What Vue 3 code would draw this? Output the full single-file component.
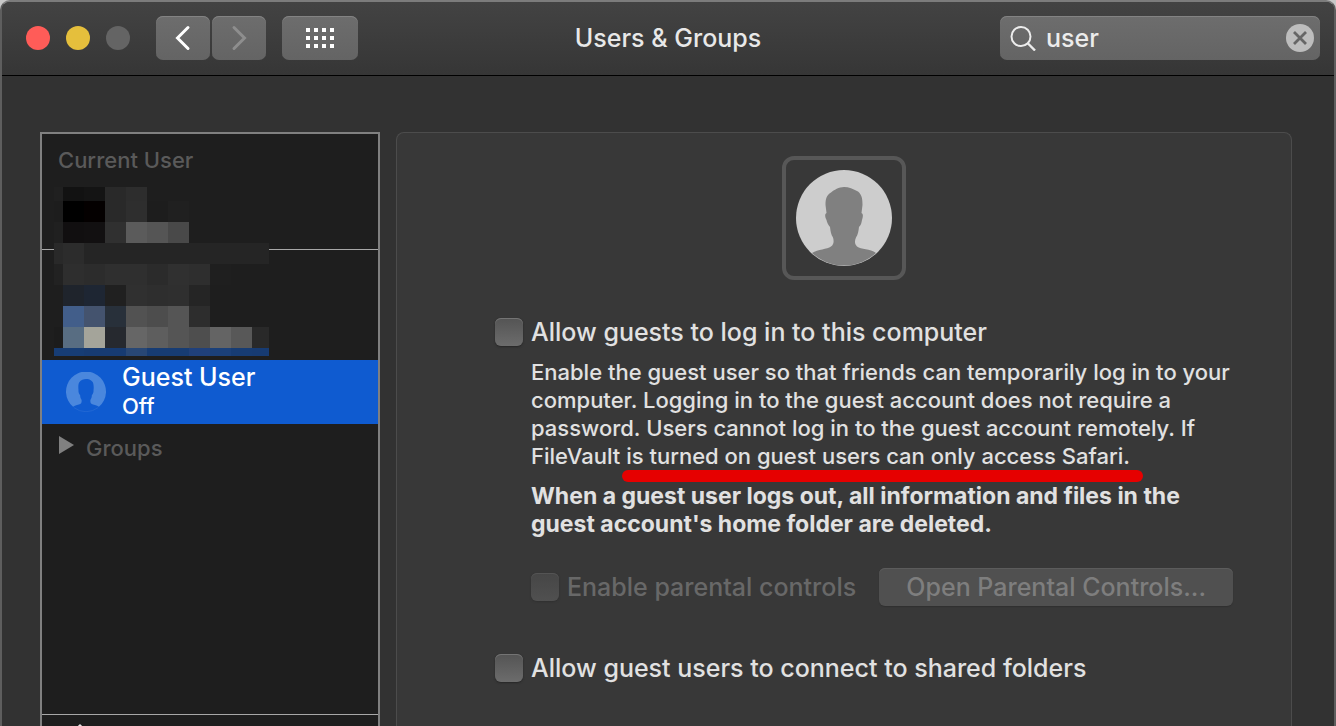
<script setup>
import { ref } from 'vue'

const query = ref('user')
const allowLogin = ref(false)
const allowShared = ref(false)
const parental = ref(false)

const dots = []
for (let row = 0; row < 3; row++) {
  for (let col = 0; col < 4; col++) dots.push({ x: col * 8, y: row * 8 })
}

// Redacted account names: one colour per tile, first and last columns are cut short
const columns = [0, 9, 30, 51, 72, 93, 114, 135, 156, 177, 198, 215]
const rows = [0, 14, 35, 56, 77, 98, 119, 140, 161, 169]
const colours = [
  ['#202020', '#121212', '#141414', '#292929', '#2d2d2d', '', '', '', '', '', ''],
  ['#1d1d1d', '#000000', '#040000', '#292929', '#2e2e2e', '#1d1d1d', '#202020', '', '', '', ''],
  ['#202020', '#110f10', '#121011', '#303030', '#5b5b5b', '#555555', '#494949', '', '', '', ''],
  ['#292929', '#2c2c2c', '#252525', '#252525', '#252525', '#252525', '#252525', '#252525', '#252525', '#252525', '#252525'],
  ['#222222', '#2e2e2e', '#2c2c2c', '#2f2f2f', '#2f2f2f', '#2b2b2b', '#303030', '#2e2e2e', '#1f1f1f', '', ''],
  ['#1e1e1e', '#1f242c', '#1e2633', '#202020', '#303030', '#2e2e2e', '#2f2f2f', '#252525', '', '', ''],
  ['#1e1e1e', '#425e8a', '#44536e', '#28303a', '#525252', '#4d4d4d', '#555555', '#2d2d2d', '', '', ''],
  ['#1c1c1c', '#586d82', '#a4a49a', '#26292f', '#666666', '#5e5e5e', '#555555', '#4e4e4e', '#646464', '#585858', '#292929'],
  ['#173d75', '#173d75', '#173b72', '#173b72', '#284775', '#173c73', '#173c73', '#20407a', '#1b4079', '#173c73', '#173b72']
]
const tiles = colours.flatMap((line, r) =>
  line.map((fill, c) => ({
    fill,
    x: columns[c],
    y: rows[r],
    w: columns[c + 1] - columns[c],
    h: rows[r + 1] - rows[r]
  })).filter((tile) => tile.fill)
)
</script>

<template>
  <div class="window">
    <header class="titlebar">
      <div class="controls">
        <div class="lights">
          <button class="light red" type="button" aria-label="Close"></button>
          <button class="light yellow" type="button" aria-label="Minimise"></button>
          <button class="light grey" type="button" aria-label="Zoom" disabled></button>
        </div>
        <div class="nav">
          <button class="tool" type="button" aria-label="Back">
            <svg width="16" height="26" viewBox="0 0 16 26"><path d="M13 2.5 2.5 13 13 23.5" fill="none" stroke="#fff" stroke-width="3" stroke-linecap="round" stroke-linejoin="miter" /></svg>
          </button>
          <button class="tool" type="button" aria-label="Forward" disabled>
            <svg width="16" height="26" viewBox="0 0 16 26"><path d="M3 2.5 13.5 13 3 23.5" fill="none" stroke="#8e8e8e" stroke-width="3" stroke-linecap="round" stroke-linejoin="miter" /></svg>
          </button>
        </div>
        <button class="tool wide" type="button" aria-label="Show All">
          <svg width="28" height="20" viewBox="0 0 28 20"><rect v-for="(d, i) in dots" :key="i" :x="d.x" :y="d.y" width="4" height="4" fill="#fff" /></svg>
        </button>
      </div>
      <h1 class="title">Users &amp; Groups</h1>
      <div class="search">
        <svg width="26" height="26" viewBox="0 0 26 26"><circle cx="11" cy="11.500" r="9.500" fill="none" stroke="#ececec" stroke-width="2" /><path d="M17.500 18 25 25.500" stroke="#ececec" stroke-width="2.400" /></svg>
        <input v-model="query" class="query" type="text" aria-label="Search" />
        <button class="clear" type="button" aria-label="Clear" @click="query = ''">
          <svg width="28" height="28" viewBox="0 0 28 28"><circle cx="14" cy="14" r="14" fill="#bdbdbd" /><path d="M8 8 20 20M20 8 8 20" stroke="#666" stroke-width="2.8" /></svg>
        </button>
      </div>
    </header>

    <main class="content">
      <aside class="sidebar">
        <div class="accounts">
          <h2 class="heading">Current User</h2>
          <div class="hidden-users">
            <div class="current"></div>
            <div class="others"></div>
            <svg class="mosaic" width="215" height="169" viewBox="0 0 215 169" shape-rendering="crispEdges">
              <rect v-for="(t, i) in tiles" :key="i" :x="t.x" :y="t.y" :width="t.w" :height="t.h" :fill="t.fill" />
            </svg>
          </div>
          <button class="guest" type="button">
            <svg width="40" height="40" viewBox="0 0 96 96">
              <path fill="#4a87dd" d="M17 83.500A48 48 0 1 1 79 83.500C74 79 65 79 61 76C58 73.500 58.500 70 58.500 67C61 64 62 60 62 56C65 52 66.500 48 66 44C67 38 66.500 28 64 24C59 18 54 17 48 17C42 17 36 19 31.500 25C29 30 29.500 38 30 44C29.500 48 31 52 34 56C34 60 35 64 37.500 67C37.500 70 38 73.500 35 76C31 79 22 79 17 83.500Z" />
              <path d="M19 85.500A48 48 0 0 0 77 85.500" fill="none" stroke="#256ad4" stroke-width="2" />
            </svg>
            <span class="who"><span class="name">Guest User</span><span class="state">Off</span></span>
          </button>
          <button class="groups" type="button">
            <svg width="15" height="24" viewBox="0 0 15 24"><path d="M0 0 15 9 0 18Z" fill="#808080" /></svg>
            <span>Groups</span>
          </button>
        </div>
        <div class="options">
          <svg width="36" height="30" viewBox="0 0 36 30"><path d="M18 0 34 15H29V29H7V15H2Z" fill="#e6e6e6" /></svg>
        </div>
      </aside>

      <section class="panel">
        <div class="portrait">
          <svg width="96" height="96" viewBox="0 0 96 96">
            <defs><clipPath id="disc"><circle cx="48" cy="48" r="47.500" /></clipPath></defs>
            <circle cx="48" cy="48" r="48" fill="#cdcdcd" />
            <path clip-path="url(#disc)" fill="#808080" d="M48 17C53 17 57 19 62 21.500C66 25 66.500 29 66.500 35L65.500 43C67.500 44 67 47 66 50C65.500 53 65 55 63 57C62.500 61 62 65 60 67.500C58.500 71 58.500 74 61 76.500C65 79.500 74 78.500 80 83V96H16V83C22 79 31 79.500 35 76.500C38 74 38 71 37 67.500C35 65 34.500 61 34 57C32 55 31 52 30.500 50C29 47 28.500 44 30.500 43L29.500 35C29.500 29 30.500 25 35 22.500C38 20 43 17 48 17Z" />
          </svg>
        </div>

        <div class="form">
          <label class="option"><input v-model="allowLogin" class="box" type="checkbox" /><span>Allow guests to log in to this computer</span></label>
          <div class="notes">
            <p>
              Enable the guest user so that friends can temporarily log in to your<br />
              computer. Logging in to the guest account does not require a<br />
              password. Users cannot log in to the guest account remotely. If<br />
              FileVault <span class="marked">is turned on guest users can only access Safari.</span>
            </p>
            <p class="warning">
              When a guest user logs out, all information and files in the<br />
              guest account's home folder are deleted.
            </p>
            <div class="parental">
              <label class="option dim"><input v-model="parental" class="box" type="checkbox" disabled /><span>Enable parental controls</span></label>
              <button class="open" type="button" disabled>Open Parental Controls...</button>
            </div>
          </div>
          <label class="option"><input v-model="allowShared" class="box" type="checkbox" /><span>Allow guest users to connect to shared folders</span></label>
        </div>
      </section>
    </main>
  </div>
</template>

<style>
body {
  margin: 0;
  background: #c8c8c8;
}
</style>

<style scoped>
.window {
  box-sizing: border-box;
  height: 100vh;
  display: flex;
  flex-direction: column;
  overflow: hidden;
  border: 2px solid #5e5e5e;
  border-top-color: #7c7c7c;
  border-bottom: 0;
  border-radius: 10px 10px 0 0;
  background: #323232;
  color: #e1e1e1;
  font-family: Inter, "Liberation Sans", sans-serif;
  font-size: 25px;
  font-weight: 500;
}
button {
  margin: 0;
  padding: 0;
  border: 0;
  background: none;
  color: inherit;
  font: inherit;
}
svg {
  display: block;
  flex: none;
}
.titlebar {
  flex: none;
  display: grid;
  grid-template-columns: 1fr auto 1fr;
  align-items: center;
  padding: 14px 14px 15px 24px;
  border-bottom: 1px solid #000;
  background: linear-gradient(#434343, #363636);
}
.controls {
  display: flex;
  align-items: center;
  gap: 16px;
}
.lights {
  display: flex;
  gap: 16px;
  margin-right: 10px;
}
.light {
  width: 24px;
  height: 24px;
  border-radius: 50%;
}
.red {
  background: #ff5c58;
}
.yellow {
  background: #e5bf3c;
}
.grey {
  background: #646464;
}
.nav {
  display: flex;
  gap: 2px;
}
.tool {
  width: 54px;
  height: 44px;
  display: flex;
  align-items: center;
  justify-content: center;
  border-radius: 7px;
  background: linear-gradient(#6d6d6d, #646464);
  box-shadow: inset 0 1px #838383;
}
.wide {
  width: 76px;
}
.title {
  margin: 0;
  padding-right: 10px;
  color: #e8e8e8;
  font-size: 25px;
  font-weight: 500;
  line-height: 32px;
}
.search {
  box-sizing: border-box;
  justify-self: end;
  width: 320px;
  height: 44px;
  display: flex;
  align-items: center;
  gap: 10px;
  padding: 0 6px 0 10px;
  border-radius: 7px;
  background: linear-gradient(#6d6d6d, #646464);
  box-shadow: inset 0 1px #838383;
}
.query {
  flex: 1;
  min-width: 0;
  padding: 0;
  border: 0;
  outline: 0;
  background: none;
  color: #ececec;
  font: inherit;
}
.content {
  flex: 1;
  min-height: 0;
  display: flex;
  gap: 16px;
  padding: 56px 42px 0 38px;
}
.sidebar {
  box-sizing: border-box;
  flex: none;
  width: 340px;
  display: flex;
  flex-direction: column;
  border: 2px solid #808080;
  border-bottom: 0;
  background: #1e1e1e;
}
.accounts {
  flex: 1;
  min-height: 0;
}
.heading {
  margin: 0;
  padding-left: 16px;
  color: #5a5a5a;
  font-size: 22px;
  font-weight: 500;
  line-height: 52px;
}
.hidden-users {
  position: relative;
}
.current {
  height: 63px;
  border-bottom: 1px solid #a8a8a8;
}
.others {
  height: 110px;
}
.mosaic {
  position: absolute;
  top: 1px;
  left: 12px;
}
.guest {
  width: 100%;
  height: 64px;
  display: flex;
  align-items: center;
  gap: 16px;
  padding-left: 24px;
  background: #0f5bd0;
  color: #fff;
  text-align: left;
}
.who {
  display: flex;
  flex-direction: column;
  padding-bottom: 2px;
}
.name {
  line-height: 30px;
}
.state {
  font-size: 22px;
  line-height: 28px;
}
.groups {
  height: 48px;
  display: flex;
  align-items: center;
  gap: 12px;
  padding-left: 17px;
  color: #5a5a5a;
  font-size: 22px;
}
.options {
  flex: none;
  height: 11px;
  padding-left: 20px;
  border-top: 1px solid #a8a8a8;
  overflow: hidden;
}
.options svg {
  margin-top: 9px;
}
.panel {
  flex: 1;
  border: 1px solid #4c4c4c;
  border-bottom: 0;
  border-radius: 8px 8px 0 0;
  background: #383838;
}
.portrait {
  box-sizing: border-box;
  width: 124px;
  height: 124px;
  display: flex;
  align-items: center;
  justify-content: center;
  margin: 23px auto 38px;
  border: 4px solid #575757;
  border-radius: 12px;
}
.form {
  padding-left: 98px;
}
.option {
  display: flex;
  align-items: center;
  gap: 8px;
  line-height: 28px;
  white-space: nowrap;
}
.box {
  appearance: none;
  flex: none;
  width: 28px;
  height: 28px;
  margin: 0;
  border-radius: 6px;
  background: linear-gradient(#545454, #6c6c6c);
  box-shadow: inset 0 1px #747474, 0 1px 2px #262626;
}
.notes {
  padding: 12px 0 48px 36px;
  font-size: 22px;
  line-height: 28px;
  white-space: nowrap;
}
.notes p {
  margin: 0;
}
.marked {
  position: relative;
}
.marked::after {
  content: "";
  position: absolute;
  right: -13px;
  bottom: -13px;
  left: -4px;
  height: 12px;
  border-radius: 6px;
  background: #e60000;
}
.notes .warning {
  margin-top: 12px;
  font-size: 23px;
  font-weight: 700;
}
.parental {
  display: flex;
  align-items: center;
  gap: 23px;
  margin-top: 30px;
  font-size: 25px;
}
.dim {
  color: #686868;
}
.dim .box {
  background: linear-gradient(#464646, #505050);
  box-shadow: inset 0 1px #545454, 0 1px 2px #303030;
}
.open {
  width: 354px;
  height: 38px;
  border-radius: 6px;
  background: #505050;
  box-shadow: inset 0 1px #5c5c5c, 0 1px 1px #303030;
  color: #7e7e7e;
}
</style>
